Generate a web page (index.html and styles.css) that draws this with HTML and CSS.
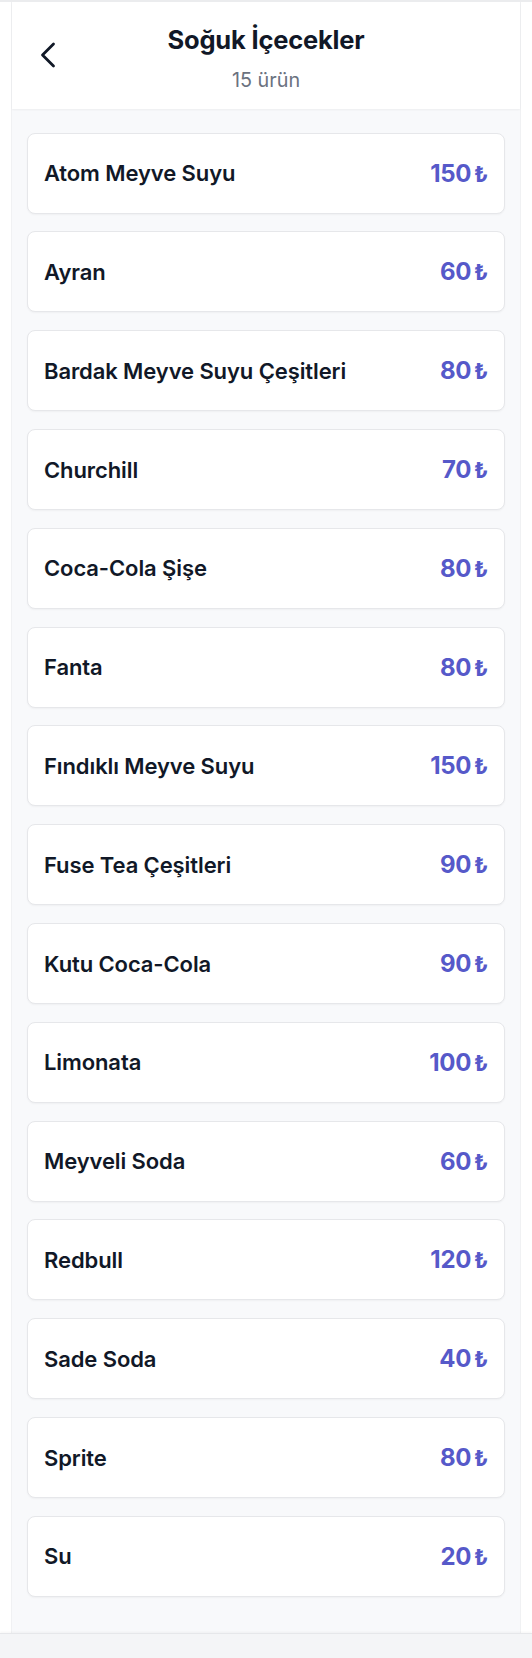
FILE: index.html
```html
<!DOCTYPE html>
<html lang="tr">
<head>
<meta charset="utf-8">
<title>Soğuk İçecekler</title>
<link rel="stylesheet" href="styles.css">
</head>
<body>
<div class="page">
  <div class="shell">
    <header class="topbar">
      <button class="back" aria-label="Geri">
        <svg width="16" height="26" viewBox="0 0 16 26"><path d="M13.5 2 L2.5 13 L13.5 24" fill="none" stroke="#111827" stroke-width="2.8" stroke-linecap="round" stroke-linejoin="round"/></svg>
      </button>
      <div class="heading">
        <h1 class="title">Soğuk İçecekler</h1>
        <p class="count">15 ürün</p>
      </div>
      <span class="spacer"></span>
    </header>
    <main class="list">
      <div class="item"><span class="name">Atom Meyve Suyu</span><span class="price">150<span class="cur">₺</span></span></div>
      <div class="item"><span class="name">Ayran</span><span class="price">60<span class="cur">₺</span></span></div>
      <div class="item"><span class="name">Bardak Meyve Suyu Çeşitleri</span><span class="price">80<span class="cur">₺</span></span></div>
      <div class="item"><span class="name">Churchill</span><span class="price">70<span class="cur">₺</span></span></div>
      <div class="item"><span class="name">Coca-Cola Şişe</span><span class="price">80<span class="cur">₺</span></span></div>
      <div class="item"><span class="name">Fanta</span><span class="price">80<span class="cur">₺</span></span></div>
      <div class="item"><span class="name">Fındıklı Meyve Suyu</span><span class="price">150<span class="cur">₺</span></span></div>
      <div class="item"><span class="name">Fuse Tea Çeşitleri</span><span class="price">90<span class="cur">₺</span></span></div>
      <div class="item"><span class="name">Kutu Coca-Cola</span><span class="price">90<span class="cur">₺</span></span></div>
      <div class="item"><span class="name">Limonata</span><span class="price">100<span class="cur">₺</span></span></div>
      <div class="item"><span class="name">Meyveli Soda</span><span class="price">60<span class="cur">₺</span></span></div>
      <div class="item"><span class="name">Redbull</span><span class="price">120<span class="cur">₺</span></span></div>
      <div class="item"><span class="name">Sade Soda</span><span class="price">40<span class="cur">₺</span></span></div>
      <div class="item"><span class="name">Sprite</span><span class="price">80<span class="cur">₺</span></span></div>
      <div class="item"><span class="name">Su</span><span class="price">20<span class="cur">₺</span></span></div>
    </main>
  </div>
</div>
<div class="bottombar"></div>
</body>
</html>
```
FILE: styles.css
```css
* { box-sizing: border-box; }
html, body { margin: 0; padding: 0; }
body {
  background: #f4f5f7;
  font-family: Inter, "Noto Sans", "DejaVu Sans", sans-serif;
  color: #111827;
}
.page {
  background: #ffffff;
  border-top: 2px solid #ebecee;
}
.shell {
  width: 510px;
  margin: 0 auto;
  background: #f8f9fb;
  border-left: 1px solid #f0f1f3;
  border-right: 1px solid #f0f1f3;
}
.topbar {
  background: #ffffff;
  display: flex;
  align-items: center;
  padding: 21px 18px 16px 18px;
  box-shadow: 0 1px 2px rgba(0,0,0,0.05);
  position: relative;
}
.back {
  width: 36px;
  height: 44px;
  margin-bottom: 7px;
  border: 0;
  background: none;
  padding: 0;
  display: flex;
  align-items: center;
  justify-content: center;
  cursor: pointer;
}
.heading {
  flex: 1;
  text-align: center;
}
.spacer { width: 36px; }
.title {
  margin: 0;
  font-size: 25.5px;
  line-height: 34px;
  font-weight: 700;
  color: #111827;
  letter-spacing: -0.2px;
}
.count {
  margin: 10px 0 0 0;
  font-size: 19.8px;
  line-height: 26px;
  color: #6b7280;
}
.list {
  display: flex;
  flex-direction: column;
  gap: 17.8px;
  padding: 23.7px 15px 36px 15px;
}
.item {
  height: 81px;
  background: #ffffff;
  border: 1px solid #e6e7ea;
  border-radius: 8px;
  box-shadow: 0 1px 2px rgba(0,0,0,0.04);
  display: flex;
  align-items: center;
  justify-content: space-between;
  padding: 0 16px 0 16px;
}
.name {
  font-size: 22px;
  font-weight: 600;
  color: #111827;
  letter-spacing: -0.1px;
}
.price {
  font-size: 24px;
  font-weight: 700;
  color: #5659c9;
  letter-spacing: -0.3px;
}
.cur {
  font-size: 22px;
  margin-left: 3px;
}
.bottombar {
  height: 40px;
  background: #f4f5f7;
  border-top: 1px solid #e6e7ea;
  box-shadow: 0 -1px 2px rgba(0,0,0,0.04);
}
```
